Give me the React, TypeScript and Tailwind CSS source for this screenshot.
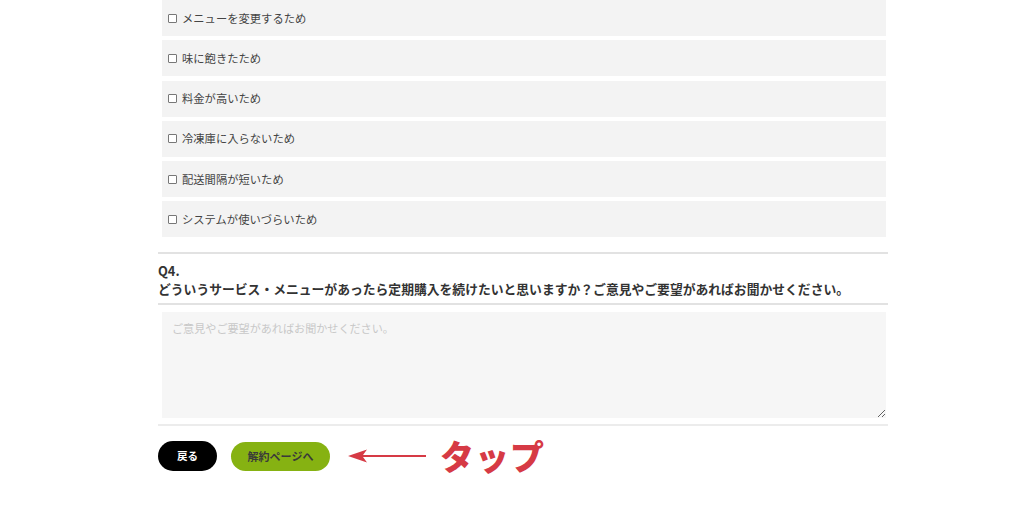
const reasons = [
  'メニューを変更するため',
  '味に飽きたため',
  '料金が高いため',
  '冷凍庫に入らないため',
  '配送間隔が短いため',
  'システムが使いづらいため',
];

const font = { fontFamily: '"Noto Sans CJK JP", "Noto Sans", sans-serif' };

export default function App() {
  return (
    <div className="min-h-[513px] bg-white text-[#333]" style={font}>
      <div className="ml-[158px] w-[730px]">
        <ul className="flex flex-col gap-[4.25px] pl-[4px] pr-[2px]">
          {reasons.map((r) => (
            <li key={r} className="h-[36px] bg-[#f3f3f3] flex items-center pl-[6px]">
              <span className="w-[9px] h-[9px] border border-[#777] rounded-[1px] bg-white mr-[5px] shrink-0" />
              <span className="text-[11.3px] text-[#444]">{r}</span>
            </li>
          ))}
        </ul>

        <div className="mt-[15px] h-[2px] bg-[#e2e2e2]" />
        <div className="pt-[8px] font-bold text-[12.8px] leading-[18px] text-[#333]">
          <p>Q4.</p>
          <p>どういうサービス・メニューがあったら定期購入を続けたいと思いますか？ご意見やご要望があればお聞かせください。</p>
        </div>
        <div className="mt-[5px] h-[2px] bg-[#e2e2e2]" />

        <div className="pl-[4px] pr-[2px] mt-[7px]">
          <textarea
            className="block w-full h-[106px] bg-[#f6f6f6] px-[10px] py-[8px] text-[11.1px] placeholder:text-[#c8c8c8] outline-none"
            placeholder="ご意見やご要望があればお聞かせください。"
          />
        </div>
        <div className="mt-[6px] h-[2px] bg-[#ececec]" />

        <div className="mt-[13px] flex items-center">
          <button className="h-[30px] w-[59px] rounded-full bg-black text-white text-[10.5px] font-bold">
            戻る
          </button>
          <button className="ml-[14px] h-[29px] w-[99px] rounded-full bg-[#86b212] text-[#3a3a3a] text-[11px] font-bold">
            解約ページへ
          </button>
          <svg className="ml-[18px]" width="78" height="16" viewBox="0 0 78 16">
            <path d="M0 8 L19 1.5 L15 7 L78 7 L78 9 L15 9 L19 14.5 Z" fill="#d63a45" />
          </svg>
          <span className="ml-[14px] text-[34px] leading-none font-black text-[#d63a45] tracking-[1px]">
            タップ
          </span>
        </div>
      </div>
    </div>
  );
}
